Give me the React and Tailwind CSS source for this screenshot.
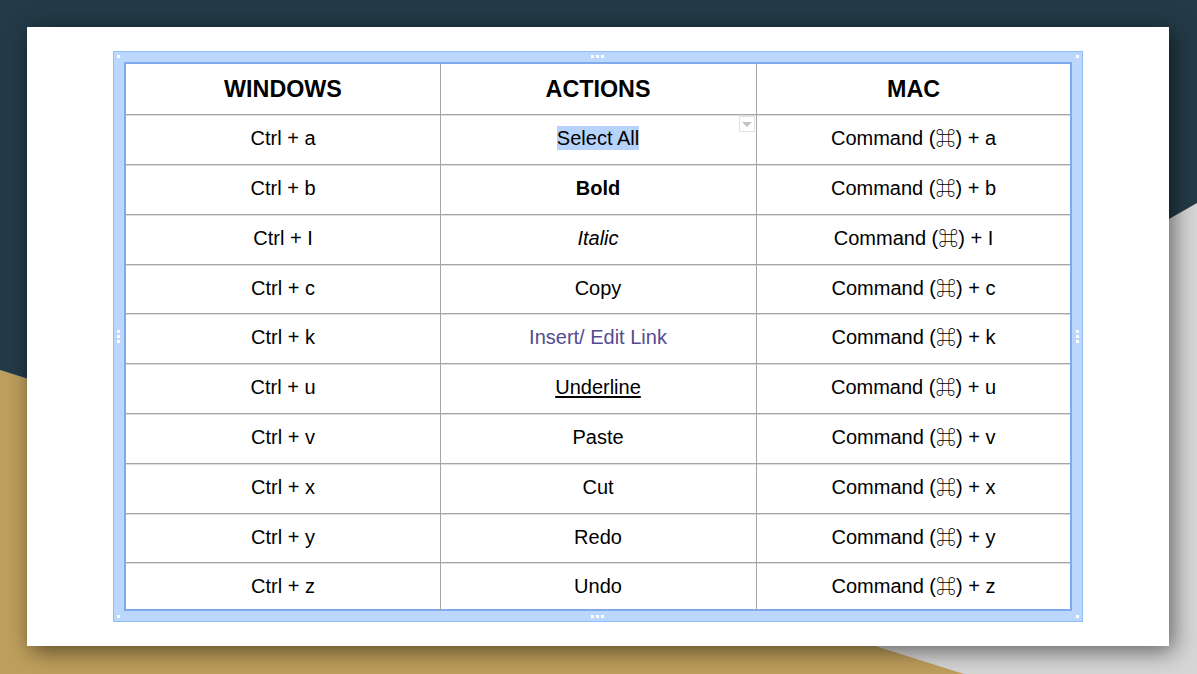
const rows = [
  { win: 'Ctrl + a', action: 'Select All', mac: 'a', kind: 'selected', h: 'h-[50px]' },
  { win: 'Ctrl + b', action: 'Bold', mac: 'b', kind: 'bold', h: 'h-[50px]' },
  { win: 'Ctrl + I', action: 'Italic', mac: 'I', kind: 'italic', h: 'h-[50px]' },
  { win: 'Ctrl + c', action: 'Copy', mac: 'c', h: 'h-[49px]' },
  { win: 'Ctrl + k', action: 'Insert/ Edit Link', mac: 'k', kind: 'link', h: 'h-[50px]' },
  { win: 'Ctrl + u', action: 'Underline', mac: 'u', kind: 'underline', h: 'h-[50px]' },
  { win: 'Ctrl + v', action: 'Paste', mac: 'v', h: 'h-[50px]' },
  { win: 'Ctrl + x', action: 'Cut', mac: 'x', h: 'h-[50px]' },
  { win: 'Ctrl + y', action: 'Redo', mac: 'y', h: 'h-[49px]' },
  { win: 'Ctrl + z', action: 'Undo', mac: 'z', h: 'h-[49px]' },
]

const Dot = () => <span className="block h-[3px] w-[3px] bg-white" />

const ActionText = ({ row }) => {
  if (row.kind === 'selected') return <span className="bg-[#b8d3fb] leading-[24px] inline-block">{row.action}</span>
  if (row.kind === 'bold') return <span className="font-bold">{row.action}</span>
  if (row.kind === 'italic') return <span className="italic">{row.action}</span>
  if (row.kind === 'link') return <span className="text-[#554a90]">{row.action}</span>
  if (row.kind === 'underline') return <span className="underline underline-offset-2">{row.action}</span>
  return row.action
}

const App = () => {
  return (
    <div className="relative h-[674px] w-[1197px] overflow-hidden bg-[#d6d6d6] font-['Liberation_Sans',Arial,sans-serif] text-black">
      <svg className="absolute inset-0" width="1197" height="674" viewBox="0 0 1197 674">
        <polygon points="0,370 964,674 0,674" fill="#bf9f5c" />
        <polygon points="0,0 1197,0 1197,203 1169,219 100,300 60,389 0,370" fill="#233b47" />
      </svg>

      <div className="relative pl-[27px] pt-[27px]">
        <div className="h-[619px] w-[1142px] bg-white pl-[86px] pt-[24px] shadow-[4px_5px_22px_rgba(0,0,0,0.55)]">
          <div className="relative h-[571px] w-[970px] border border-[#93bdf9] bg-[#bbd7fe] p-[10px]">
            <div className="absolute left-[3px] top-[3px] h-[3px] w-[3px] bg-white" />
            <div className="absolute right-[3px] top-[3px] h-[3px] w-[3px] bg-white" />
            <div className="absolute bottom-[3px] left-[3px] h-[3px] w-[3px] bg-white" />
            <div className="absolute bottom-[3px] right-[3px] h-[3px] w-[3px] bg-white" />
            <div className="absolute left-[477px] top-[3px] flex gap-[2px]"><Dot /><Dot /><Dot /></div>
            <div className="absolute bottom-[3px] left-[477px] flex gap-[2px]"><Dot /><Dot /><Dot /></div>
            <div className="absolute left-[3px] top-[278px] flex flex-col gap-[2px]"><Dot /><Dot /><Dot /></div>
            <div className="absolute right-[3px] top-[278px] flex flex-col gap-[2px]"><Dot /><Dot /><Dot /></div>

            <div className="h-[549px] w-[948px] border-2 border-[#80aaeb] bg-white">
              <div className="grid h-[50px] grid-cols-[315px_316px_1fr] text-[23.3px] font-bold">
                <div className="flex items-center justify-center border-r border-[#a6a6a6] pt-[1px]">WINDOWS</div>
                <div className="flex items-center justify-center border-r border-[#a6a6a6] pl-[1px] pr-[2px] pt-[1px]">ACTIONS</div>
                <div className="flex items-center justify-center pt-[1px]">MAC</div>
              </div>
              {rows.map((row) => (
                <div key={row.win} className={`grid ${row.h} grid-cols-[315px_316px_1fr] border-t border-[#a6a6a6] text-[20px] shadow-[inset_0_1px_0_#dedede]`}>
                  <div className="flex items-center justify-center border-r border-[#a6a6a6] pb-[3px]">{row.win}</div>
                  <div className="relative flex items-center justify-center border-r border-[#a6a6a6] pr-[1px] pb-[3px]">
                    <ActionText row={row} />
                    {row.kind === 'selected' && (
                      <span className="absolute right-[1px] top-[1px] flex h-[16px] w-[16px] items-center justify-center border border-[#e2e2e2] bg-white">
                        <span className="h-0 w-0 border-x-[5px] border-t-[5px] border-x-transparent border-t-[#c4c4c4]" />
                      </span>
                    )}
                  </div>
                  <div className="flex items-center justify-center pb-[3px]">
                    Command (<span className="font-['Noto_Sans_CJK_SC','DejaVu_Sans',sans-serif] font-light">⌘</span>) + {row.mac}
                  </div>
                </div>
              ))}
            </div>
          </div>
        </div>
      </div>
    </div>
  )
}

export default App
